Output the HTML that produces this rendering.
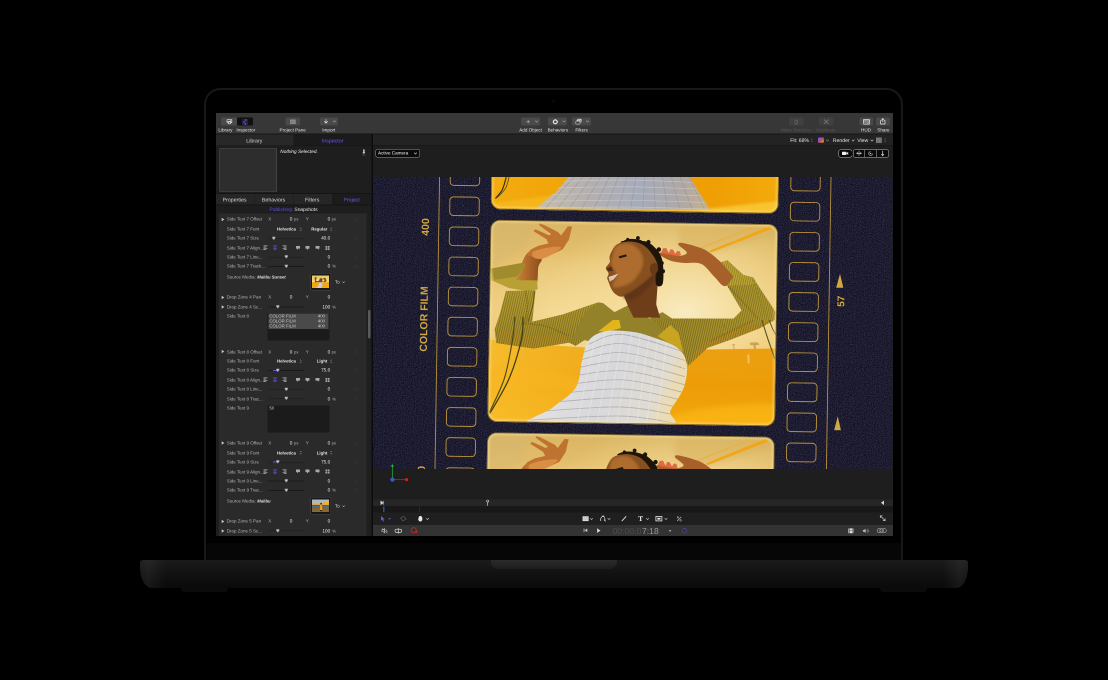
<!DOCTYPE html><html><head><meta charset="utf-8"><title>Motion</title><style>
html,body{margin:0;padding:0;background:#000;}
body{width:1108px;height:680px;position:relative;overflow:hidden;font-family:"Liberation Sans",sans-serif;}
.a{position:absolute;}
#lid{left:204.4px;top:87.5px;width:695px;height:472px;border:2px solid #181818;border-bottom:none;border-radius:16.5px 16.5px 3px 3px;background:#000;box-sizing:content-box;}
#chin{left:206.4px;top:543px;width:695px;height:17px;background:#060606;}
#screen{left:216px;top:113px;width:677px;height:423px;background:#1e1e1e;overflow:hidden;}
#base{left:140px;top:560px;width:828px;height:28px;border-radius:3px 3px 12px 12px / 3px 3px 20px 20px;background:linear-gradient(90deg,rgba(255,255,255,0.03) 0,rgba(255,255,255,0.055) 8px,rgba(255,255,255,0) 26px,rgba(255,255,255,0) 802px,rgba(255,255,255,0.055) 820px,rgba(255,255,255,0.03) 828px),linear-gradient(#1b1b1b 0,#151515 30%,#0e0e0e 70%,#0a0a0a 100%);}
#notch{left:491px;top:560px;width:126px;height:9px;border-radius:0 0 7px 7px;background:linear-gradient(#2b2b2b,#1d1d1d);}
.foot{top:588px;height:4px;background:#0b0b0b;border-radius:0 0 6px 6px;}
.t{position:absolute;text-rendering:geometricPrecision;white-space:nowrap;line-height:12px;height:12px;font-size:9.6px;color:#d6d6d6;}
#s2{position:absolute;left:0;top:0;width:1354px;height:846px;transform-origin:0 0;transform:scale(.5);will-change:transform;overflow:hidden;}
.g{color:#9a9a9a;}
.c{transform:translateX(-50%);}
.r{transform:translateX(-100%);}
.btn{position:absolute;background:#454545;border-radius:3px;}
</style></head><body>
<div id="lid" class="a"></div><div id="chin" class="a"></div><div class="a" style="left:552.4px;top:99.6px;width:2.2px;height:2.2px;border-radius:50%;background:#0b0b0d"></div>
<div id="base" class="a"></div><div id="notch" class="a"></div>
<div class="a foot" style="left:181px;width:47px"></div><div class="a foot" style="left:880px;width:47px"></div>
<div id="screen" class="a"><div id="s2">
<div class="a" style="left:0.00px;top:0.00px;width:1354.00px;height:42.00px;background:#373737;"></div>
<div class="a" style="left:0.00px;top:41.20px;width:1354.00px;height:1.60px;background:#161616;"></div>
<div class="a" style="left:9.60px;top:9.00px;width:32.00px;height:16.40px;background:#4a4a4a;border-radius:3px;"></div>
<div class="t c" style="left:18.80px;top:28px;color:#e2e2e2;font-size:9.20px;">Library</div>
<div class="a" style="left:41.80px;top:9.00px;width:32.60px;height:16.40px;background:#101010;border-radius:3px;"></div>
<div class="t c" style="left:59.60px;top:28px;color:#e2e2e2;font-size:9.20px;">Inspector</div>
<svg class="a" style="left:20.00px;top:11.20px;" width="13.2" height="12.8" viewBox="0 0 6.6 6.4"><path d="M1 1.2h3.2v1.2M1 1.2v2.6h0.8M4.2 1.2h1.6v3h-0.9" fill="none" stroke="#e8e8e8" stroke-width="0.7"/><path d="M1.8 2.6h3.2v2.2c0 1.2-3.2 1.2-3.2 0z" fill="#e8e8e8"/><circle cx="3.4" cy="4.3" r="0.8" fill="#464646"/></svg>
<svg class="a" style="left:51.20px;top:11.60px;" width="14" height="12" viewBox="0 0 7 6"><g stroke="#6a5cf0" stroke-width="0.55" fill="#6a5cf0"><path d="M0.6 1H6.4M0.6 3H6.4M0.6 5H6.4"/><circle cx="4.4" cy="1" r="0.55"/><circle cx="2.6" cy="3" r="0.55"/><circle cx="3.8" cy="5" r="0.6"/></g></svg>
<div class="a" style="left:138.80px;top:9.00px;width:29.20px;height:16.40px;background:#4a4a4a;border-radius:3px;"></div>
<div class="t c" style="left:153.40px;top:28px;color:#e2e2e2;font-size:9.20px;">Project Pane</div>
<svg class="a" style="left:148.00px;top:12.80px;" width="11.6" height="9.6" viewBox="0 0 5.8 4.8"><rect x="0" y="0" width="5.8" height="4.8" fill="#8c8c8c"/><path d="M0 1.6H5.8M0 3.2H5.8M2 1.6V4.8" stroke="#6e6e6e" stroke-width="0.35"/></svg>
<div class="a" style="left:207.80px;top:9.00px;width:36.60px;height:16.40px;background:#4a4a4a;border-radius:3px;"></div>
<div class="t c" style="left:225.60px;top:28px;color:#e2e2e2;font-size:9.20px;">Import</div>
<svg class="a" style="left:215.20px;top:12.40px;" width="10" height="10" viewBox="0 0 5 5"><path d="M2.5 0.4V4 M0.9 2.5L2.5 4.2L4.1 2.5" fill="none" stroke="#f0f0f0" stroke-width="0.65" stroke-linecap="round" stroke-linejoin="round"/></svg>
<svg class="a" style="left:234.20px;top:15.40px;" width="6" height="4" viewBox="0 0 3 2"><path d="M0.3 0.3 L1.5 1.6 L2.7 0.3" fill="none" stroke="#a8a8a8" stroke-width="0.6" stroke-linecap="round"/></svg>
<div class="a" style="left:610.20px;top:9.00px;width:37.60px;height:16.40px;background:#4a4a4a;border-radius:3px;"></div>
<div class="t c" style="left:629.20px;top:28px;color:#e2e2e2;font-size:9.20px;">Add Object</div>
<svg class="a" style="left:619.60px;top:12.60px;" width="8.8" height="8.8" viewBox="0 0 4.4 4.4"><path d="M2.2 0.4V4M0.4 2.2H4" stroke="#9e9e9e" stroke-width="0.8"/></svg>
<svg class="a" style="left:638.40px;top:15.40px;" width="6" height="4" viewBox="0 0 3 2"><path d="M0.3 0.3 L1.5 1.6 L2.7 0.3" fill="none" stroke="#a8a8a8" stroke-width="0.6" stroke-linecap="round"/></svg>
<div class="a" style="left:664.20px;top:9.00px;width:38.00px;height:16.40px;background:#4a4a4a;border-radius:3px;"></div>
<div class="t c" style="left:683.60px;top:28px;color:#e2e2e2;font-size:9.20px;">Behaviors</div>
<svg class="a" style="left:673.20px;top:11.60px;" width="11.2" height="11.2" viewBox="0 0 5.6 5.6"><circle cx="2.8" cy="2.8" r="1.9" fill="none" stroke="#f0f0f0" stroke-width="1.1"/><path d="M2.8 0.2V1M2.8 4.6V5.4M0.2 2.8H1M4.6 2.8H5.4" stroke="#f0f0f0" stroke-width="0.7"/></svg>
<svg class="a" style="left:693.00px;top:15.40px;" width="6" height="4" viewBox="0 0 3 2"><path d="M0.3 0.3 L1.5 1.6 L2.7 0.3" fill="none" stroke="#a8a8a8" stroke-width="0.6" stroke-linecap="round"/></svg>
<div class="a" style="left:712.00px;top:9.00px;width:38.00px;height:16.40px;background:#4a4a4a;border-radius:3px;"></div>
<div class="t c" style="left:731.20px;top:28px;color:#e2e2e2;font-size:9.20px;">Filters</div>
<svg class="a" style="left:719.20px;top:11.20px;" width="12.8" height="12" viewBox="0 0 6.4 6"><rect x="1.6" y="0.4" width="4.4" height="3.4" rx="0.6" fill="#e6e6e6"/><rect x="0.8" y="1.4" width="4.4" height="3.2" rx="0.6" fill="#cfcfcf" stroke="#464646" stroke-width="0.4"/><rect x="0.3" y="2.6" width="4.2" height="3" rx="0.6" fill="#464646" stroke="#e6e6e6" stroke-width="0.5"/></svg>
<svg class="a" style="left:739.80px;top:15.40px;" width="6" height="4" viewBox="0 0 3 2"><path d="M0.3 0.3 L1.5 1.6 L2.7 0.3" fill="none" stroke="#a8a8a8" stroke-width="0.6" stroke-linecap="round"/></svg>
<div class="a" style="left:1146.20px;top:9.00px;width:28.60px;height:16.40px;background:#404040;border-radius:3px;"></div>
<div class="t c" style="left:1159.80px;top:28px;color:#565656;font-size:9.20px;">Make Particles</div>
<svg class="a" style="left:1155.20px;top:11.60px;" width="10.8" height="11.6" viewBox="0 0 5.4 5.8"><circle cx="2.7" cy="2.8" r="1.5" fill="none" stroke="#686868" stroke-width="0.6"/><path d="M1 0.4L1.8 1.6M4.4 0.4L3.6 1.6M1.4 5.4H4M2.7 4.3V5.4" stroke="#686868" stroke-width="0.6" fill="none"/></svg>
<div class="a" style="left:1205.80px;top:9.00px;width:29.20px;height:16.40px;background:#404040;border-radius:3px;"></div>
<div class="t c" style="left:1219.80px;top:28px;color:#565656;font-size:9.20px;">Replicate</div>
<svg class="a" style="left:1214.80px;top:11.80px;" width="11.2" height="10.8" viewBox="0 0 5.6 5.4"><path d="M0.6 0.6L5 4.8M5 0.6L0.6 4.8" stroke="#707070" stroke-width="1" fill="none"/></svg>
<div class="a" style="left:1287.00px;top:9.00px;width:27.00px;height:16.40px;background:#4a4a4a;border-radius:3px;"></div>
<div class="t c" style="left:1300.00px;top:28px;color:#e2e2e2;font-size:9.20px;">HUD</div>
<svg class="a" style="left:1293.60px;top:11.80px;" width="14" height="11.2" viewBox="0 0 7 5.6"><rect x="0.4" y="0.4" width="6.2" height="4.8" rx="0.7" fill="none" stroke="#e4e4e4" stroke-width="0.7"/><path d="M0.4 1.9H6.6" stroke="#e4e4e4" stroke-width="0.7"/><path d="M1.4 3H3M1.4 4.1H3M3.8 3H5.6V4.3H3.8Z" stroke="#e4e4e4" stroke-width="0.45" fill="none"/></svg>
<div class="a" style="left:1319.60px;top:9.00px;width:28.20px;height:16.40px;background:#4a4a4a;border-radius:3px;"></div>
<div class="t c" style="left:1334.80px;top:28px;color:#e2e2e2;font-size:9.20px;">Share</div>
<svg class="a" style="left:1328.00px;top:10.40px;" width="11.2" height="13.2" viewBox="0 0 5.6 6.6"><path d="M1.6 2.6H0.6V6H5V2.6H4" fill="none" stroke="#e8e8e8" stroke-width="0.7"/><path d="M2.8 4V0.6M1.6 1.7L2.8 0.5L4 1.7" fill="none" stroke="#e8e8e8" stroke-width="0.7"/></svg>
<div class="a" style="left:0.00px;top:42.80px;width:311.00px;height:803.20px;background:#1e1e1e;"></div>
<div class="a" style="left:0.00px;top:42.80px;width:155.00px;height:22.00px;background:#282828;"></div>
<div class="a" style="left:155.00px;top:42.80px;width:156.00px;height:22.00px;background:#1b1b1b;"></div>
<div class="t c" style="left:76.60px;top:50px;font-size:10.50px;">Library</div>
<div class="t c" style="left:233.20px;top:50px;color:#6a5cf5;font-size:10.50px;">Inspector</div>
<div class="a" style="left:0.00px;top:64.80px;width:311.00px;height:1.60px;background:#141414;"></div>
<div class="a" style="left:6.60px;top:70.60px;width:115.00px;height:86.00px;background:#2d2d2d;border:1.4px solid #5a5a5a;box-sizing:border-box;"></div>
<div class="t " style="left:128.60px;top:72px;font-style:italic;color:#ececec;font-size:9.50px;">Nothing Selected.</div>
<svg class="a" style="left:292.00px;top:71.60px;" width="7.6" height="14" viewBox="0 0 3.8 7"><path d="M1.2 0.4H2.6V3L3.4 4.2H0.4L1.2 3Z" fill="#d0d0d0"/><path d="M1.9 4.2V5.6" stroke="#d0d0d0" stroke-width="0.5"/><path d="M0.3 6.5H3.5" stroke="#6a6a6a" stroke-width="0.4"/></svg>
<div class="a" style="left:0.00px;top:161.20px;width:311.00px;height:22.00px;background:#262626;"></div>
<div class="a" style="left:0.00px;top:160.40px;width:311.00px;height:1.40px;background:#141414;"></div>
<div class="a" style="left:232.00px;top:161.80px;width:79.00px;height:21.40px;background:#1c1c1c;"></div>
<div class="a" style="left:77.00px;top:161.80px;width:1.40px;height:21.40px;background:#181818;"></div>
<div class="a" style="left:155.00px;top:161.80px;width:1.40px;height:21.40px;background:#181818;"></div>
<div class="a" style="left:232.00px;top:161.80px;width:1.40px;height:21.40px;background:#181818;"></div>
<div class="t c" style="left:37.20px;top:168px;font-size:10.50px;">Properties</div>
<div class="t c" style="left:115.20px;top:168px;font-size:10.50px;">Behaviors</div>
<div class="t c" style="left:192.40px;top:168px;font-size:10.50px;">Filters</div>
<div class="t c" style="left:271.20px;top:168px;color:#6a5cf5;font-size:10.50px;">Project</div>
<div class="a" style="left:0.00px;top:183.20px;width:311.00px;height:1.40px;background:#141414;"></div>
<div class="t c" style="left:129.60px;top:188px;color:#5b50e0;font-size:9.80px;">Publishing</div>
<div class="t c" style="left:180.00px;top:188px;color:#e6e6e6;font-size:9.80px;">Snapshots</div>
<div class="a" style="left:6.40px;top:201.00px;width:294.60px;height:645.00px;background:#2a2a2a;"></div>
<div class="a" style="left:301.00px;top:201.00px;width:10.00px;height:645.00px;background:#1f1f1f;"></div>
<div class="a" style="left:304.40px;top:394.00px;width:4.80px;height:57.00px;background:#5a5a5a;border-radius:2.4px;"></div>
<div class="a" style="left:311.00px;top:42.80px;width:3.00px;height:803.20px;background:#0c0c0c;"></div>
<svg class="a" style="left:10.60px;top:208.80px;" width="6" height="8" viewBox="0 0 3 4"><path d="M0.2 0.3 L2.8 2 L0.2 3.7Z" fill="#c8c8c8"/></svg>
<div class="t " style="left:21.60px;top:206px;color:#b4b4b4;font-size:9.00px;">Side Text 7 Offset</div>
<div class="t " style="left:104.40px;top:206px;color:#b4b4b4;font-size:9.00px;">X</div>
<div class="t r" style="left:152.80px;top:206px;color:#ececec;font-size:9.40px;">0</div>
<div class="t " style="left:156.00px;top:206px;color:#b4b4b4;font-size:8.40px;">px</div>
<div class="t " style="left:179.40px;top:206px;color:#b4b4b4;font-size:9.00px;">Y</div>
<div class="t r" style="left:228.40px;top:206px;color:#ececec;font-size:9.40px;">0</div>
<div class="t " style="left:231.20px;top:206px;color:#b4b4b4;font-size:8.40px;">px</div>
<svg class="a" style="left:276.60px;top:208.40px;" width="8.8" height="8.8" viewBox="0 0 4.4 4.4"><path d="M2.2 0.4 L4 2.2 L2.2 4 L0.4 2.2Z" fill="none" stroke="#3c3c3c" stroke-width="0.5"/></svg>
<div class="t " style="left:21.60px;top:226px;color:#b4b4b4;font-size:9.00px;">Side Text 7 Font</div>
<div class="t " style="left:122.00px;top:226px;color:#e4e4e4;font-weight:bold;font-size:8.60px;">Helvetica</div>
<svg class="a" style="left:167.20px;top:227.60px;" width="4.8" height="8.8" viewBox="0 0 2.4 4.4"><path d="M0.4 1.6 L1.2 0.7 L2 1.6 M0.4 2.8 L1.2 3.7 L2 2.8" fill="none" stroke="#bdbdbd" stroke-width="0.45"/></svg>
<div class="t r" style="left:222.60px;top:226px;color:#e4e4e4;font-weight:bold;font-size:8.60px;">Regular</div>
<svg class="a" style="left:228.00px;top:227.60px;" width="4.8" height="8.8" viewBox="0 0 2.4 4.4"><path d="M0.4 1.6 L1.2 0.7 L2 1.6 M0.4 2.8 L1.2 3.7 L2 2.8" fill="none" stroke="#bdbdbd" stroke-width="0.45"/></svg>
<div class="t " style="left:21.60px;top:244px;color:#b4b4b4;font-size:9.00px;">Side Text 7 Size</div>
<div class="a" style="left:105.40px;top:250.00px;width:72.00px;height:1.40px;background:#1a1a1a;"></div>
<svg class="a" style="left:111.60px;top:246.80px;" width="7.2" height="7.6" viewBox="0 0 3.6 3.8"><path d="M0.3 0.3 H3.3 V1.6 L1.8 3.5 L0.3 1.6Z" fill="#b8b8b8"/></svg>
<div class="t r" style="left:228.40px;top:244px;color:#ececec;font-size:9.40px;">40.0</div>
<svg class="a" style="left:276.60px;top:246.20px;" width="8.8" height="8.8" viewBox="0 0 4.4 4.4"><path d="M2.2 0.4 L4 2.2 L2.2 4 L0.4 2.2Z" fill="none" stroke="#3c3c3c" stroke-width="0.5"/></svg>
<div class="t " style="left:21.60px;top:264px;color:#b4b4b4;font-size:9.00px;">Side Text 7 Align...</div>
<svg class="a" style="left:95.20px;top:265.20px;" width="8" height="8.8" viewBox="0 0 4 4.4"><path d="M0 0.4H4 M0 1.6H2.6 M0 2.8H4 M0 4H2.6" stroke="#b5b5b5" stroke-width="0.7" fill="none"/></svg>
<svg class="a" style="left:114.00px;top:265.20px;" width="8" height="8.8" viewBox="0 0 4 4.4"><path d="M0 0.4H4 M0.7 1.6H3.3 M0 2.8H4 M0.7 4H3.3" stroke="#5b4fe0" stroke-width="0.7" fill="none"/></svg>
<svg class="a" style="left:133.20px;top:265.20px;" width="8" height="8.8" viewBox="0 0 4 4.4"><path d="M0 0.4H4 M1.4 1.6H4 M0 2.8H4 M1.4 4H4" stroke="#b5b5b5" stroke-width="0.7" fill="none"/></svg>
<svg class="a" style="left:160.20px;top:265.60px;" width="8" height="8" viewBox="0 0 4 4"><path d="M0 0H4V2.6H2L1 4V2.6H0Z" fill="#a8a8a8"/></svg>
<svg class="a" style="left:179.40px;top:265.60px;" width="8" height="8" viewBox="0 0 4 4"><path d="M0 0H4V2.6H2.8L2 4L1.2 2.6H0Z" fill="#a8a8a8"/></svg>
<svg class="a" style="left:199.40px;top:265.60px;" width="8" height="8" viewBox="0 0 4 4"><path d="M0 0H4V2.6H3V4L2 2.6H0Z" fill="#a8a8a8"/></svg>
<svg class="a" style="left:219.00px;top:265.60px;" width="8" height="8" viewBox="0 0 4 4"><path d="M0 0H1.7V1.7H0Z M2.3 0H4V1.7H2.3Z M0 2.3H1.7V4H0Z M2.3 2.3H4V4H2.3Z" fill="#a8a8a8"/></svg>
<div class="t " style="left:21.60px;top:282px;color:#b4b4b4;font-size:9.00px;">Side Text 7 Line...</div>
<div class="a" style="left:105.40px;top:287.60px;width:72.00px;height:1.40px;background:#1a1a1a;"></div>
<svg class="a" style="left:137.00px;top:284.40px;" width="7.2" height="7.6" viewBox="0 0 3.6 3.8"><path d="M0.3 0.3 H3.3 V1.6 L1.8 3.5 L0.3 1.6Z" fill="#b8b8b8"/></svg>
<div class="t r" style="left:228.40px;top:282px;color:#ececec;font-size:9.40px;">0</div>
<svg class="a" style="left:276.60px;top:283.80px;" width="8.8" height="8.8" viewBox="0 0 4.4 4.4"><path d="M2.2 0.4 L4 2.2 L2.2 4 L0.4 2.2Z" fill="none" stroke="#3c3c3c" stroke-width="0.5"/></svg>
<div class="t " style="left:21.60px;top:300px;color:#b4b4b4;font-size:9.00px;">Side Text 7 Track...</div>
<div class="a" style="left:105.40px;top:306.40px;width:72.00px;height:1.40px;background:#1a1a1a;"></div>
<svg class="a" style="left:137.00px;top:303.20px;" width="7.2" height="7.6" viewBox="0 0 3.6 3.8"><path d="M0.3 0.3 H3.3 V1.6 L1.8 3.5 L0.3 1.6Z" fill="#b8b8b8"/></svg>
<div class="t r" style="left:228.40px;top:300px;color:#ececec;font-size:9.40px;">0</div>
<svg class="a" style="left:276.60px;top:302.60px;" width="8.8" height="8.8" viewBox="0 0 4.4 4.4"><path d="M2.2 0.4 L4 2.2 L2.2 4 L0.4 2.2Z" fill="none" stroke="#3c3c3c" stroke-width="0.5"/></svg>
<div class="t " style="left:232.60px;top:300px;color:#b4b4b4;font-size:8.40px;">%</div>
<div class="t " style="left:21.60px;top:322px;color:#b4b4b4;font-size:9.00px;">Source Media:</div>
<div class="t " style="left:82.60px;top:322px;color:#e4e4e4;font-style:italic;font-weight:bold;font-size:8.40px;">Malibu Sunset</div>
<div class="t " style="left:238.00px;top:332px;color:#d0d0d0;font-size:9.20px;">To</div>
<svg class="a" style="left:252.40px;top:336.40px;" width="6.4" height="4.8" viewBox="0 0 3.2 2.4"><path d="M0.4 0.5 L1.6 1.8 L2.8 0.5" fill="none" stroke="#bdbdbd" stroke-width="0.55"/></svg>
<div class="a" style="left:188.60px;top:320.00px;width:41.60px;height:34.60px;background:#181818;border:1px solid #484848;border-radius:2px;box-sizing:border-box;"></div>
<svg class="a" style="left:192.00px;top:324.80px;" width="34.4" height="25.4" viewBox="0 0 17.2 12.7"><defs><linearGradient id="t0" x1="0" y1="0" x2="0" y2="1"><stop offset="0" stop-color="#e8c868"/><stop offset="0.5" stop-color="#f2d880"/><stop offset="0.56" stop-color="#f0a414"/><stop offset="1" stop-color="#f4ac10"/></linearGradient></defs><rect width="17.2" height="12.7" fill="url(#t0)"/><path d="M2.6 2.2L4.2 1.2L4.6 3.2L3.6 5.4L7 5.2L7.8 3L9.4 2.4L10.4 3.6L12 2.4L13.6 2.6L14.6 5.6L12.8 6.6L10.2 6L9.8 7.4H7L6.4 6.4L3 7Z" fill="#7a4a1a"/><circle cx="5.4" cy="4.6" r="1" fill="#f8e8a0"/><circle cx="11.4" cy="4.8" r="1.1" fill="#f8e8a0"/><path d="M7 6.8H10.2L10.6 9.4L9 12.7H4.2L6.6 9.6Z" fill="#c8ccd8"/></svg>
<svg class="a" style="left:10.60px;top:364.80px;" width="6" height="8" viewBox="0 0 3 4"><path d="M0.2 0.3 L2.8 2 L0.2 3.7Z" fill="#c8c8c8"/></svg>
<div class="t " style="left:21.60px;top:362px;color:#b4b4b4;font-size:9.00px;">Drop Zone 4 Pan</div>
<div class="t " style="left:104.40px;top:362px;color:#b4b4b4;font-size:9.00px;">X</div>
<div class="t r" style="left:152.80px;top:362px;color:#ececec;font-size:9.40px;">0</div>
<div class="t " style="left:179.40px;top:362px;color:#b4b4b4;font-size:9.00px;">Y</div>
<div class="t r" style="left:228.40px;top:362px;color:#ececec;font-size:9.40px;">0</div>
<svg class="a" style="left:10.60px;top:383.80px;" width="6" height="8" viewBox="0 0 3 4"><path d="M0.2 0.3 L2.8 2 L0.2 3.7Z" fill="#c8c8c8"/></svg>
<div class="t " style="left:21.60px;top:382px;color:#b4b4b4;font-size:9.00px;">Drop Zone 4 Sc...</div>
<div class="a" style="left:105.40px;top:387.20px;width:72.00px;height:1.40px;background:#1a1a1a;"></div>
<svg class="a" style="left:120.40px;top:384.00px;" width="7.2" height="7.6" viewBox="0 0 3.6 3.8"><path d="M0.3 0.3 H3.3 V1.6 L1.8 3.5 L0.3 1.6Z" fill="#b8b8b8"/></svg>
<div class="t r" style="left:228.40px;top:382px;color:#ececec;font-size:9.40px;">100</div>
<div class="t " style="left:232.60px;top:382px;color:#b4b4b4;font-size:8.40px;">%</div>
<div class="t " style="left:21.60px;top:400px;color:#b4b4b4;font-size:9.00px;">Side Text 8</div>
<div class="a" style="left:103.20px;top:400.40px;width:123.60px;height:55.00px;background:#1b1b1b;"></div>
<div class="a" style="left:104.80px;top:401.20px;width:120.00px;height:30.80px;background:#4a4a4a;"></div>
<div class="t " style="left:106.80px;top:400px;color:#c8c8c8;font-size:8.60px;">COLOR FILM</div>
<div class="t r" style="left:218.00px;top:400px;color:#c8c8c8;font-size:8.60px;">400</div>
<div class="t " style="left:106.80px;top:410px;color:#c8c8c8;font-size:8.60px;">COLOR FILM</div>
<div class="t r" style="left:218.00px;top:410px;color:#c8c8c8;font-size:8.60px;">400</div>
<div class="t " style="left:106.80px;top:420px;color:#c8c8c8;font-size:8.60px;">COLOR FILM</div>
<div class="t r" style="left:218.00px;top:420px;color:#c8c8c8;font-size:8.60px;">400</div>
<svg class="a" style="left:10.60px;top:473.00px;" width="6" height="8" viewBox="0 0 3 4"><path d="M0.2 0.3 L2.8 2 L0.2 3.7Z" fill="#c8c8c8"/></svg>
<div class="t " style="left:21.60px;top:472px;color:#b4b4b4;font-size:9.00px;">Side Text 8 Offset</div>
<div class="t " style="left:104.40px;top:472px;color:#b4b4b4;font-size:9.00px;">X</div>
<div class="t r" style="left:152.80px;top:472px;color:#ececec;font-size:9.40px;">0</div>
<div class="t " style="left:156.00px;top:472px;color:#b4b4b4;font-size:8.40px;">px</div>
<div class="t " style="left:179.40px;top:472px;color:#b4b4b4;font-size:9.00px;">Y</div>
<div class="t r" style="left:228.40px;top:472px;color:#ececec;font-size:9.40px;">0</div>
<div class="t " style="left:231.20px;top:472px;color:#b4b4b4;font-size:8.40px;">px</div>
<svg class="a" style="left:276.60px;top:472.60px;" width="8.8" height="8.8" viewBox="0 0 4.4 4.4"><path d="M2.2 0.4 L4 2.2 L2.2 4 L0.4 2.2Z" fill="none" stroke="#3c3c3c" stroke-width="0.5"/></svg>
<div class="t " style="left:21.60px;top:490px;color:#b4b4b4;font-size:9.00px;">Side Text 8 Font</div>
<div class="t " style="left:122.00px;top:490px;color:#e4e4e4;font-weight:bold;font-size:8.60px;">Helvetica</div>
<svg class="a" style="left:167.20px;top:491.60px;" width="4.8" height="8.8" viewBox="0 0 2.4 4.4"><path d="M0.4 1.6 L1.2 0.7 L2 1.6 M0.4 2.8 L1.2 3.7 L2 2.8" fill="none" stroke="#bdbdbd" stroke-width="0.45"/></svg>
<div class="t r" style="left:222.60px;top:490px;color:#e4e4e4;font-weight:bold;font-size:8.60px;">Light</div>
<svg class="a" style="left:228.00px;top:491.60px;" width="4.8" height="8.8" viewBox="0 0 2.4 4.4"><path d="M0.4 1.6 L1.2 0.7 L2 1.6 M0.4 2.8 L1.2 3.7 L2 2.8" fill="none" stroke="#bdbdbd" stroke-width="0.45"/></svg>
<div class="t " style="left:21.60px;top:508px;color:#b4b4b4;font-size:9.00px;">Side Text 8 Size</div>
<div class="a" style="left:105.40px;top:514.20px;width:72.00px;height:1.40px;background:#1a1a1a;"></div>
<div class="a" style="left:114.00px;top:513.90px;width:10.00px;height:1.80px;background:#5b4fe0;"></div>
<svg class="a" style="left:120.40px;top:511.00px;" width="7.2" height="7.6" viewBox="0 0 3.6 3.8"><path d="M0.3 0.3 H3.3 V1.6 L1.8 3.5 L0.3 1.6Z" fill="#b8b8b8"/></svg>
<div class="t r" style="left:228.40px;top:508px;color:#ececec;font-size:9.40px;">75.0</div>
<svg class="a" style="left:276.60px;top:510.40px;" width="8.8" height="8.8" viewBox="0 0 4.4 4.4"><path d="M2.2 0.4 L4 2.2 L2.2 4 L0.4 2.2Z" fill="none" stroke="#3c3c3c" stroke-width="0.5"/></svg>
<div class="t " style="left:21.60px;top:528px;color:#b4b4b4;font-size:9.00px;">Side Text 8 Align...</div>
<svg class="a" style="left:95.20px;top:529.40px;" width="8" height="8.8" viewBox="0 0 4 4.4"><path d="M0 0.4H4 M0 1.6H2.6 M0 2.8H4 M0 4H2.6" stroke="#b5b5b5" stroke-width="0.7" fill="none"/></svg>
<svg class="a" style="left:114.00px;top:529.40px;" width="8" height="8.8" viewBox="0 0 4 4.4"><path d="M0 0.4H4 M0.7 1.6H3.3 M0 2.8H4 M0.7 4H3.3" stroke="#5b4fe0" stroke-width="0.7" fill="none"/></svg>
<svg class="a" style="left:133.20px;top:529.40px;" width="8" height="8.8" viewBox="0 0 4 4.4"><path d="M0 0.4H4 M1.4 1.6H4 M0 2.8H4 M1.4 4H4" stroke="#b5b5b5" stroke-width="0.7" fill="none"/></svg>
<svg class="a" style="left:160.20px;top:529.80px;" width="8" height="8" viewBox="0 0 4 4"><path d="M0 0H4V2.6H2L1 4V2.6H0Z" fill="#a8a8a8"/></svg>
<svg class="a" style="left:179.40px;top:529.80px;" width="8" height="8" viewBox="0 0 4 4"><path d="M0 0H4V2.6H2.8L2 4L1.2 2.6H0Z" fill="#a8a8a8"/></svg>
<svg class="a" style="left:199.40px;top:529.80px;" width="8" height="8" viewBox="0 0 4 4"><path d="M0 0H4V2.6H3V4L2 2.6H0Z" fill="#a8a8a8"/></svg>
<svg class="a" style="left:219.00px;top:529.80px;" width="8" height="8" viewBox="0 0 4 4"><path d="M0 0H1.7V1.7H0Z M2.3 0H4V1.7H2.3Z M0 2.3H1.7V4H0Z M2.3 2.3H4V4H2.3Z" fill="#a8a8a8"/></svg>
<div class="t " style="left:21.60px;top:546px;color:#b4b4b4;font-size:9.00px;">Side Text 8 Line...</div>
<div class="a" style="left:105.40px;top:551.80px;width:72.00px;height:1.40px;background:#1a1a1a;"></div>
<svg class="a" style="left:137.00px;top:548.60px;" width="7.2" height="7.6" viewBox="0 0 3.6 3.8"><path d="M0.3 0.3 H3.3 V1.6 L1.8 3.5 L0.3 1.6Z" fill="#b8b8b8"/></svg>
<div class="t r" style="left:228.40px;top:546px;color:#ececec;font-size:9.40px;">0</div>
<svg class="a" style="left:276.60px;top:548.00px;" width="8.8" height="8.8" viewBox="0 0 4.4 4.4"><path d="M2.2 0.4 L4 2.2 L2.2 4 L0.4 2.2Z" fill="none" stroke="#3c3c3c" stroke-width="0.5"/></svg>
<div class="t " style="left:21.60px;top:566px;color:#b4b4b4;font-size:9.00px;">Side Text 8 Trac...</div>
<div class="a" style="left:105.40px;top:570.60px;width:72.00px;height:1.40px;background:#1a1a1a;"></div>
<svg class="a" style="left:137.00px;top:567.40px;" width="7.2" height="7.6" viewBox="0 0 3.6 3.8"><path d="M0.3 0.3 H3.3 V1.6 L1.8 3.5 L0.3 1.6Z" fill="#b8b8b8"/></svg>
<div class="t r" style="left:228.40px;top:566px;color:#ececec;font-size:9.40px;">0</div>
<svg class="a" style="left:276.60px;top:566.80px;" width="8.8" height="8.8" viewBox="0 0 4.4 4.4"><path d="M2.2 0.4 L4 2.2 L2.2 4 L0.4 2.2Z" fill="none" stroke="#3c3c3c" stroke-width="0.5"/></svg>
<div class="t " style="left:232.60px;top:566px;color:#b4b4b4;font-size:8.40px;">%</div>
<div class="t " style="left:21.60px;top:584px;color:#b4b4b4;font-size:9.00px;">Side Text 9</div>
<div class="a" style="left:103.20px;top:584.60px;width:123.60px;height:54.60px;background:#1b1b1b;"></div>
<div class="t " style="left:106.80px;top:584px;color:#d0d0d0;font-size:8.60px;">50</div>
<svg class="a" style="left:10.60px;top:656.40px;" width="6" height="8" viewBox="0 0 3 4"><path d="M0.2 0.3 L2.8 2 L0.2 3.7Z" fill="#c8c8c8"/></svg>
<div class="t " style="left:21.60px;top:654px;color:#b4b4b4;font-size:9.00px;">Side Text 9 Offset</div>
<div class="t " style="left:104.40px;top:654px;color:#b4b4b4;font-size:9.00px;">X</div>
<div class="t r" style="left:152.80px;top:654px;color:#ececec;font-size:9.40px;">0</div>
<div class="t " style="left:156.00px;top:654px;color:#b4b4b4;font-size:8.40px;">px</div>
<div class="t " style="left:179.40px;top:654px;color:#b4b4b4;font-size:9.00px;">Y</div>
<div class="t r" style="left:228.40px;top:654px;color:#ececec;font-size:9.40px;">0</div>
<div class="t " style="left:231.20px;top:654px;color:#b4b4b4;font-size:8.40px;">px</div>
<svg class="a" style="left:276.60px;top:656.00px;" width="8.8" height="8.8" viewBox="0 0 4.4 4.4"><path d="M2.2 0.4 L4 2.2 L2.2 4 L0.4 2.2Z" fill="none" stroke="#3c3c3c" stroke-width="0.5"/></svg>
<div class="t " style="left:21.60px;top:674px;color:#b4b4b4;font-size:9.00px;">Side Text 9 Font</div>
<div class="t " style="left:122.00px;top:674px;color:#e4e4e4;font-weight:bold;font-size:8.60px;">Helvetica</div>
<svg class="a" style="left:167.20px;top:675.20px;" width="4.8" height="8.8" viewBox="0 0 2.4 4.4"><path d="M0.4 1.6 L1.2 0.7 L2 1.6 M0.4 2.8 L1.2 3.7 L2 2.8" fill="none" stroke="#bdbdbd" stroke-width="0.45"/></svg>
<div class="t r" style="left:222.60px;top:674px;color:#e4e4e4;font-weight:bold;font-size:8.60px;">Light</div>
<svg class="a" style="left:228.00px;top:675.20px;" width="4.8" height="8.8" viewBox="0 0 2.4 4.4"><path d="M0.4 1.6 L1.2 0.7 L2 1.6 M0.4 2.8 L1.2 3.7 L2 2.8" fill="none" stroke="#bdbdbd" stroke-width="0.45"/></svg>
<div class="t " style="left:21.60px;top:692px;color:#b4b4b4;font-size:9.00px;">Side Text 9 Size</div>
<div class="a" style="left:105.40px;top:697.60px;width:72.00px;height:1.40px;background:#1a1a1a;"></div>
<div class="a" style="left:114.00px;top:697.30px;width:10.00px;height:1.80px;background:#5b4fe0;"></div>
<svg class="a" style="left:120.40px;top:694.40px;" width="7.2" height="7.6" viewBox="0 0 3.6 3.8"><path d="M0.3 0.3 H3.3 V1.6 L1.8 3.5 L0.3 1.6Z" fill="#b8b8b8"/></svg>
<div class="t r" style="left:228.40px;top:692px;color:#ececec;font-size:9.40px;">75.0</div>
<svg class="a" style="left:276.60px;top:693.80px;" width="8.8" height="8.8" viewBox="0 0 4.4 4.4"><path d="M2.2 0.4 L4 2.2 L2.2 4 L0.4 2.2Z" fill="none" stroke="#3c3c3c" stroke-width="0.5"/></svg>
<div class="t " style="left:21.60px;top:712px;color:#b4b4b4;font-size:9.00px;">Side Text 9 Align...</div>
<svg class="a" style="left:95.20px;top:713.00px;" width="8" height="8.8" viewBox="0 0 4 4.4"><path d="M0 0.4H4 M0 1.6H2.6 M0 2.8H4 M0 4H2.6" stroke="#b5b5b5" stroke-width="0.7" fill="none"/></svg>
<svg class="a" style="left:114.00px;top:713.00px;" width="8" height="8.8" viewBox="0 0 4 4.4"><path d="M0 0.4H4 M0.7 1.6H3.3 M0 2.8H4 M0.7 4H3.3" stroke="#5b4fe0" stroke-width="0.7" fill="none"/></svg>
<svg class="a" style="left:133.20px;top:713.00px;" width="8" height="8.8" viewBox="0 0 4 4.4"><path d="M0 0.4H4 M1.4 1.6H4 M0 2.8H4 M1.4 4H4" stroke="#b5b5b5" stroke-width="0.7" fill="none"/></svg>
<svg class="a" style="left:160.20px;top:713.40px;" width="8" height="8" viewBox="0 0 4 4"><path d="M0 0H4V2.6H2L1 4V2.6H0Z" fill="#a8a8a8"/></svg>
<svg class="a" style="left:179.40px;top:713.40px;" width="8" height="8" viewBox="0 0 4 4"><path d="M0 0H4V2.6H2.8L2 4L1.2 2.6H0Z" fill="#a8a8a8"/></svg>
<svg class="a" style="left:199.40px;top:713.40px;" width="8" height="8" viewBox="0 0 4 4"><path d="M0 0H4V2.6H3V4L2 2.6H0Z" fill="#a8a8a8"/></svg>
<svg class="a" style="left:219.00px;top:713.40px;" width="8" height="8" viewBox="0 0 4 4"><path d="M0 0H1.7V1.7H0Z M2.3 0H4V1.7H2.3Z M0 2.3H1.7V4H0Z M2.3 2.3H4V4H2.3Z" fill="#a8a8a8"/></svg>
<div class="t " style="left:21.60px;top:730px;color:#b4b4b4;font-size:9.00px;">Side Text 9 Line...</div>
<div class="a" style="left:105.40px;top:735.40px;width:72.00px;height:1.40px;background:#1a1a1a;"></div>
<svg class="a" style="left:137.00px;top:732.20px;" width="7.2" height="7.6" viewBox="0 0 3.6 3.8"><path d="M0.3 0.3 H3.3 V1.6 L1.8 3.5 L0.3 1.6Z" fill="#b8b8b8"/></svg>
<div class="t r" style="left:228.40px;top:730px;color:#ececec;font-size:9.40px;">0</div>
<svg class="a" style="left:276.60px;top:731.60px;" width="8.8" height="8.8" viewBox="0 0 4.4 4.4"><path d="M2.2 0.4 L4 2.2 L2.2 4 L0.4 2.2Z" fill="none" stroke="#3c3c3c" stroke-width="0.5"/></svg>
<div class="t " style="left:21.60px;top:748px;color:#b4b4b4;font-size:9.00px;">Side Text 9 Trac...</div>
<div class="a" style="left:105.40px;top:754.20px;width:72.00px;height:1.40px;background:#1a1a1a;"></div>
<svg class="a" style="left:137.00px;top:751.00px;" width="7.2" height="7.6" viewBox="0 0 3.6 3.8"><path d="M0.3 0.3 H3.3 V1.6 L1.8 3.5 L0.3 1.6Z" fill="#b8b8b8"/></svg>
<div class="t r" style="left:228.40px;top:748px;color:#ececec;font-size:9.40px;">0</div>
<svg class="a" style="left:276.60px;top:750.40px;" width="8.8" height="8.8" viewBox="0 0 4.4 4.4"><path d="M2.2 0.4 L4 2.2 L2.2 4 L0.4 2.2Z" fill="none" stroke="#3c3c3c" stroke-width="0.5"/></svg>
<div class="t " style="left:232.60px;top:748px;color:#b4b4b4;font-size:8.40px;">%</div>
<div class="t " style="left:21.60px;top:770px;color:#b4b4b4;font-size:9.00px;">Source Media:</div>
<div class="t " style="left:82.60px;top:770px;color:#e4e4e4;font-style:italic;font-weight:bold;font-size:8.40px;">Malibu</div>
<div class="t " style="left:238.00px;top:780px;color:#d0d0d0;font-size:9.20px;">To</div>
<svg class="a" style="left:252.40px;top:784.40px;" width="6.4" height="4.8" viewBox="0 0 3.2 2.4"><path d="M0.4 0.5 L1.6 1.8 L2.8 0.5" fill="none" stroke="#bdbdbd" stroke-width="0.55"/></svg>
<div class="a" style="left:188.60px;top:768.00px;width:41.60px;height:34.60px;background:#181818;border:1px solid #484848;border-radius:2px;box-sizing:border-box;"></div>
<svg class="a" style="left:192.00px;top:772.80px;" width="34.4" height="25.4" viewBox="0 0 17.2 12.7"><defs><linearGradient id="t1" x1="0" y1="0" x2="0" y2="1"><stop offset="0" stop-color="#a8bccc"/><stop offset="0.3" stop-color="#b8b8a8"/><stop offset="0.42" stop-color="#d8a050"/><stop offset="0.46" stop-color="#35506a"/><stop offset="0.56" stop-color="#5a7488"/><stop offset="0.62" stop-color="#7a6238"/><stop offset="1" stop-color="#8a6c34"/></linearGradient><linearGradient id="t1b" x1="0" y1="0" x2="1" y2="0"><stop offset="0.45" stop-color="#f0a820" stop-opacity="0"/><stop offset="0.9" stop-color="#f4b020" stop-opacity="0.95"/></linearGradient></defs><rect width="17.2" height="12.7" fill="url(#t1)"/><rect y="2.4" width="17.2" height="3.2" fill="url(#t1b)"/><path d="M8.2 5.4H10L10.4 10.6H7.8Z" fill="#f0a010"/><circle cx="9.1" cy="4.2" r="0.9" fill="#3a2410"/><path d="M8 10.6H10.2V11.6H8Z" fill="#2a1c10"/></svg>
<svg class="a" style="left:10.60px;top:812.80px;" width="6" height="8" viewBox="0 0 3 4"><path d="M0.2 0.3 L2.8 2 L0.2 3.7Z" fill="#c8c8c8"/></svg>
<div class="t " style="left:21.60px;top:810px;color:#b4b4b4;font-size:9.00px;">Drop Zone 5 Pan</div>
<div class="t " style="left:104.40px;top:810px;color:#b4b4b4;font-size:9.00px;">X</div>
<div class="t r" style="left:152.80px;top:810px;color:#ececec;font-size:9.40px;">0</div>
<div class="t " style="left:179.40px;top:810px;color:#b4b4b4;font-size:9.00px;">Y</div>
<div class="t r" style="left:228.40px;top:810px;color:#ececec;font-size:9.40px;">0</div>
<svg class="a" style="left:10.60px;top:831.60px;" width="6" height="8" viewBox="0 0 3 4"><path d="M0.2 0.3 L2.8 2 L0.2 3.7Z" fill="#c8c8c8"/></svg>
<div class="t " style="left:21.60px;top:830px;color:#b4b4b4;font-size:9.00px;">Drop Zone 5 Sc...</div>
<div class="a" style="left:105.40px;top:835.00px;width:72.00px;height:1.40px;background:#1a1a1a;"></div>
<svg class="a" style="left:120.40px;top:831.80px;" width="7.2" height="7.6" viewBox="0 0 3.6 3.8"><path d="M0.3 0.3 H3.3 V1.6 L1.8 3.5 L0.3 1.6Z" fill="#b8b8b8"/></svg>
<div class="t r" style="left:228.40px;top:830px;color:#ececec;font-size:9.40px;">100</div>
<div class="t " style="left:232.60px;top:830px;color:#b4b4b4;font-size:8.40px;">%</div>
<div class="a" style="left:314.00px;top:42.80px;width:1040.00px;height:804.00px;background:#1e1e1e;"></div>
<div class="a" style="left:314.00px;top:42.80px;width:1040.00px;height:21.60px;background:#232323;"></div>
<div class="a" style="left:314.00px;top:64.40px;width:1040.00px;height:1.20px;background:#181818;"></div>
<svg class="a" style="left:314px;top:128px" width="1039.0" height="584" viewBox="373 177 519.5 292">
<defs><linearGradient id="sky" x1="0" y1="0" x2="0" y2="1"><stop offset="0" stop-color="#dab664"/><stop offset="0.2" stop-color="#e6c270"/><stop offset="0.45" stop-color="#efca78"/><stop offset="0.62" stop-color="#f0c468"/><stop offset="1" stop-color="#eab040"/></linearGradient>
<linearGradient id="sand" x1="0" y1="0" x2="0" y2="1"><stop offset="0" stop-color="#eaa51a"/><stop offset="0.45" stop-color="#ee9e08"/><stop offset="0.8" stop-color="#f5ac0e"/><stop offset="1" stop-color="#fbbd1c"/></linearGradient>
<linearGradient id="sandl" x1="0" y1="0" x2="1" y2="0"><stop offset="0" stop-color="#f8c030" stop-opacity="0.85"/><stop offset="0.35" stop-color="#f6b828" stop-opacity="0.5"/><stop offset="0.6" stop-color="#ec9a08" stop-opacity="0.3"/><stop offset="1" stop-color="#ec9a08" stop-opacity="0.45"/></linearGradient>
<linearGradient id="topbg" x1="0" y1="0" x2="1" y2="0"><stop offset="0" stop-color="#f4ac10"/><stop offset="0.3" stop-color="#f0a408"/><stop offset="0.75" stop-color="#ef9e04"/><stop offset="1" stop-color="#f4aa0c"/></linearGradient>
<linearGradient id="topdress" x1="0" y1="0" x2="1" y2="0"><stop offset="0" stop-color="#c8beb0"/><stop offset="0.3" stop-color="#b4b0b0"/><stop offset="0.6" stop-color="#a6acbc"/><stop offset="0.85" stop-color="#b0a8a4"/><stop offset="1" stop-color="#c8b48c"/></linearGradient>
<pattern id="ribs" width="2.2" height="2.2" patternUnits="userSpaceOnUse" patternTransform="rotate(12)"><rect width="1" height="2.2" fill="#6a601c"/><rect x="1" width="1.2" height="2.2" fill="#c0a430"/></pattern>
<radialGradient id="glow" cx="0.68" cy="0.44" r="0.5"><stop offset="0" stop-color="#f9ecc2" stop-opacity="1"/><stop offset="0.45" stop-color="#f7e2a6" stop-opacity="0.7"/><stop offset="1" stop-color="#f6dc96" stop-opacity="0"/></radialGradient>
<radialGradient id="glow2" cx="0.27" cy="0.5" r="0.36"><stop offset="0" stop-color="#f6de9a" stop-opacity="0.9"/><stop offset="1" stop-color="#f4e0a4" stop-opacity="0"/></radialGradient>
<linearGradient id="dress" x1="0" y1="0" x2="1" y2="0.25"><stop offset="0" stop-color="#ece2cc"/><stop offset="0.25" stop-color="#e4e2e0"/><stop offset="0.6" stop-color="#d8d8dc"/><stop offset="0.9" stop-color="#e0dcd4"/><stop offset="1" stop-color="#ecdcb4"/></linearGradient>
<linearGradient id="olive" x1="0" y1="0" x2="0" y2="1"><stop offset="0" stop-color="#ac9430"/><stop offset="1" stop-color="#8a7822"/></linearGradient>
<linearGradient id="olive2" x1="0" y1="0" x2="1" y2="0"><stop offset="0" stop-color="#857422"/><stop offset="1" stop-color="#a68e2c"/></linearGradient>
<linearGradient id="skin" x1="0" y1="0" x2="1" y2="0"><stop offset="0" stop-color="#cf8438"/><stop offset="1" stop-color="#8a4c1c"/></linearGradient>
<filter id="b1" x="-20%" y="-20%" width="140%" height="140%"><feGaussianBlur stdDeviation="1.2"/></filter>
<filter id="b3" x="-20%" y="-20%" width="140%" height="140%"><feGaussianBlur stdDeviation="3"/></filter>
<clipPath id="fclip"><rect x="0" y="0" width="287.5" height="202.0" rx="9.5"/></clipPath><clipPath id="dclip"><path d="M99.8 119.4C103.5 114.5 108.9 111.4 115.9 109.8C122.8 108.1 134.3 109.0 141.7 109.7C149.2 110.4 152.9 111.4 160.6 113.9C168.4 116.4 182.0 120.3 188.3 124.8C194.6 129.3 197.0 134.1 198.3 140.8C199.5 147.5 198.3 157.3 195.7 165.1C193.2 173.0 185.9 181.5 182.8 188.0C179.7 194.5 200.2 201.2 176.9 204.3C153.6 207.3 61.5 209.3 42.9 206.4C24.3 203.4 57.8 193.2 65.3 186.6C72.7 180.0 82.9 174.7 87.6 166.8C92.4 158.9 91.6 147.1 93.7 139.2C95.7 131.3 96.1 124.3 99.8 119.4Z"/></clipPath><g id="photo"><g clip-path="url(#fclip)">
<rect width="287.5" height="202.0" fill="url(#sky)"/>
<rect width="287.5" height="202.0" fill="url(#glow)"/>
<rect width="287.5" height="202.0" fill="url(#glow2)"/>
<path d="M188.0 2.0L285.0 -1.1L285.2 10.2L217.6 30.7L188.3 24.6Z" fill="#d9b45e" opacity="0.55" filter="url(#b3)"/>
<path d="M219.1 27.7L278.6 2.2L281.9 4.4L220.8 29.3Z" fill="#f2a616"/>
<path d="M209.4 24.3L262.4 2.4L267.3 2.7L211.0 25.6Z" fill="#e8b048" opacity="0.7"/>
<path d="M0.9 1.7L43.0 1.0L36.9 27.0L1.6 48.6Z" fill="#d6b670" opacity="0.45" filter="url(#b3)"/>
<path d="M-0.5 119.7L44.9 123.8L96.7 126.2L190.0 129.6L219.1 126.3L290.2 124.2L291.6 208.9L-2.3 213.5Z" fill="url(#sand)"/>
<path d="M-0.5 119.7L44.9 123.8L96.7 126.2L190.0 129.6L219.1 126.3L290.2 124.2L291.6 208.9L-2.3 213.5Z" fill="url(#sandl)"/>
<path d="M0.0 153.6C7.5 147.6 30.7 147.5 45.3 148.1C59.8 148.7 80.4 153.5 87.5 157.1C94.5 160.8 94.7 168.3 87.7 170.1C80.7 171.8 60.1 165.1 45.6 167.5C31.0 169.9 8.1 186.7 0.5 184.4C-7.1 182.1 -7.4 159.7 0.0 153.6Z" fill="#f8b624" opacity="0.6" filter="url(#b3)"/>
<path d="M203.8 187.7C221.8 183.6 273.8 177.4 287.9 179.9C301.9 182.3 306.2 198.5 288.2 202.5C270.2 206.6 193.9 206.7 179.8 204.2C165.8 201.7 185.8 191.7 203.8 187.7Z" fill="#fbb818" opacity="0.7" filter="url(#b3)"/>
<path d="M243.2 120.7L246.5 120.7L245.5 122.6L245.9 125.5L244.6 125.5L244.9 122.6Z" fill="#8a6a20" opacity="0.45"/>
<path d="M261.0 118.8L269.1 118.4L270.7 120.6L266.9 121.3L267.3 124.9L265.3 124.9L264.9 121.3L261.7 121.1Z" fill="#8a6a20" opacity="0.45"/>
<path d="M258.6 130.8L260.9 130.8L261.3 139.5L259.4 139.5Z" fill="#f4d890" opacity="0.6"/>
<path d="M36.2 34.0C38.4 31.1 40.8 30.2 43.4 31.0C46.0 31.7 50.8 35.9 51.6 38.4C52.5 41.0 49.5 41.7 48.5 46.3C47.5 50.8 49.3 63.2 45.6 65.7C41.8 68.2 28.7 64.1 26.1 61.2C23.5 58.2 28.3 52.7 29.9 48.2C31.6 43.6 33.9 36.9 36.2 34.0Z" fill="url(#skin)"/>
<path d="M48.6 2.9L53.0 4.1L67.7 11.3L70.7 14.5L77.3 5.4L81.5 5.6L78.8 18.3L72.5 28.4L62.9 33.1L51.6 38.4L43.5 36.9L36.7 34.5L40.5 29.2L48.2 25.2L58.2 22.8L56.2 18.6L43.1 10.7L45.0 8.8L58.7 14.7L60.9 13.4L48.8 4.8Z" fill="#bf7330"/>
<path d="M43.4 31.1C46.1 29.4 55.0 27.4 59.5 26.7C64.1 25.9 70.3 25.4 70.9 26.5C71.4 27.6 66.1 31.1 62.9 33.1C59.7 35.1 54.9 37.8 51.6 38.4C48.4 39.1 44.9 38.2 43.5 36.9C42.1 35.7 40.8 32.8 43.4 31.1Z" fill="#e0954a" opacity="0.8"/>
<path d="M188.3 22.1C187.5 20.4 188.6 19.7 191.8 20.1C195.1 20.4 203.4 22.6 207.7 24.0C212.1 25.4 214.0 26.0 217.8 28.4C221.7 30.8 226.3 34.5 230.6 38.5C235.0 42.6 243.1 48.9 243.8 52.9C244.5 56.9 238.3 62.7 235.1 62.7C231.8 62.8 228.4 56.9 224.4 53.2C220.4 49.5 216.4 43.0 211.2 40.8C206.1 38.6 198.6 40.6 193.4 40.1C188.3 39.6 184.4 39.3 180.5 38.0C176.5 36.7 171.2 33.7 169.9 32.4C168.5 31.0 169.1 30.0 172.2 30.1C175.3 30.2 184.4 33.1 188.5 33.1C192.6 33.0 196.9 31.5 196.8 29.7C196.8 27.9 189.1 23.7 188.3 22.1Z" fill="#a8602a"/>
<path d="M170.6 31.1L173.0 25.7L176.2 25.6L178.7 30.5L180.3 26.7L182.9 27.0L185.2 31.2L187.1 28.2L189.4 28.5L191.0 32.0L188.5 33.4Z" fill="#dc6238" opacity="0.9"/>
<path d="M0.8 48.9L33.1 42.5L35.6 45.2L26.4 59.9L47.4 59.9L48.2 68.9L39.2 71.0L19.7 68.1L1.8 60.3Z" fill="#b8a034"/>
<path d="M0.8 48.9L33.1 42.5L35.6 45.2L27.6 56.3L5.0 59.9Z" fill="#a08c2c"/>
<path d="M16.5 71.0L46.0 69.9L43.2 101.3L73.5 93.6L108.9 80.9L118.8 90.5L96.6 118.2L87.0 124.8L80.4 121.6L44.9 128.0L7.7 123.1L5.8 109.9L11.2 92.1Z" fill="url(#olive)"/>
<path d="M7.7 123.1L44.9 128.0L80.4 121.6L77.1 113.6L44.8 115.7L10.7 111.4Z" fill="#a87c1e" opacity="0.75"/>
<path d="M231.0 38.9L237.4 36.8L253.5 51.1L263.5 53.6L266.9 59.0L286.4 87.8L285.7 95.8L270.5 104.4L241.6 116.2L219.0 124.6L200.2 142.7L188.3 124.8L165.4 110.6L163.6 97.7L173.3 96.1L194.3 95.7L244.5 95.0L252.4 86.7L237.5 62.1L243.8 52.9Z" fill="url(#olive2)"/>
<path d="M200.2 142.7L219.0 124.6L241.6 116.2L270.5 104.4L283.3 96.1L254.3 102.7L225.3 112.9L206.2 129.4Z" fill="#b07a1c" opacity="0.8"/>
<path d="M231.0 38.9L237.4 36.8L253.5 51.1L263.5 53.6L266.9 59.0L260.1 61.1L237.5 62.1L243.8 52.9Z" fill="#bca634"/>
<path d="M34.8 103.3C38.6 103.7 50.0 103.8 57.5 105.8C65.1 107.8 76.5 113.6 80.3 115.2" fill="none" stroke="#3a2e10" stroke-width="1.7" stroke-dasharray="0.7 1.3" opacity="0.8"/>
<path d="M36.0 70.7C36.3 73.1 38.0 79.9 38.1 85.2C38.2 90.6 36.7 100.1 36.5 103.1" fill="none" stroke="#3a2e10" stroke-width="1.7" stroke-dasharray="0.7 1.3" opacity="0.8"/>
<path d="M239.1 63.5C241.6 66.0 249.0 73.4 253.9 78.6C258.8 83.8 266.3 91.9 268.7 94.6" fill="none" stroke="#3a2e10" stroke-width="1.7" stroke-dasharray="0.7 1.3" opacity="0.8"/>
<path d="M222.2 117.5C225.4 115.9 234.5 111.2 241.4 107.8C248.4 104.3 260.2 98.6 263.9 96.8" fill="none" stroke="#3a2e10" stroke-width="1.7" stroke-dasharray="0.7 1.3" opacity="0.8"/>
<path d="M16.5 71.0L46.0 69.9L43.2 101.3L73.5 93.6L108.9 80.9L118.8 90.5L96.6 118.2L87.0 124.8L80.4 121.6L44.9 128.0L7.7 123.1L5.8 109.9L11.2 92.1Z" fill="url(#ribs)" opacity="0.5"/>
<path d="M231.0 38.9L237.4 36.8L253.5 51.1L263.5 53.6L266.9 59.0L286.4 87.8L285.7 95.8L270.5 104.4L241.6 116.2L219.0 124.6L200.2 142.7L188.3 124.8L165.4 110.6L163.6 97.7L173.3 96.1L194.3 95.7L244.5 95.0L252.4 86.7L237.5 62.1L243.8 52.9Z" fill="url(#ribs)" opacity="0.5"/>
<path d="M108.9 80.9L113.8 81.6L125.3 90.4L138.1 83.7L155.9 93.1L160.3 96.3L173.2 89.6L183.0 95.9L165.2 97.7L189.9 126.4L156.2 112.4L99.8 119.7L83.6 116.7L96.1 90.8Z" fill="#93822a"/>
<path d="M133.6 72.0L158.5 53.1L166.4 51.6L168.1 60.8L166.9 82.0L171.1 95.2L144.6 95.6L139.1 85.1Z" fill="#6e3e1a"/>
<path d="M130.2 20.4C130.4 19.6 135.6 17.3 139.4 17.0C143.1 16.6 148.7 17.3 152.6 18.5C156.6 19.6 160.1 20.8 163.3 23.9C166.6 26.9 170.5 30.8 172.1 37.0C173.8 43.1 174.1 56.6 173.2 60.8C172.2 65.0 167.9 64.6 166.6 62.2C165.2 59.8 166.4 51.4 165.0 46.3C163.6 41.3 160.6 35.5 158.2 31.9C155.7 28.3 153.4 26.4 150.1 24.7C146.8 23.0 141.5 22.3 138.1 21.6C134.8 20.9 130.0 21.2 130.2 20.4Z" fill="#1e140a"/>
<circle cx="137.4" cy="17.4" r="1.5" fill="#1e140a"/>
<circle cx="147.6" cy="15.9" r="1.9" fill="#1e140a"/>
<circle cx="158.2" cy="19.7" r="2.1" fill="#1e140a"/>
<circle cx="168.7" cy="27.1" r="2.2" fill="#1e140a"/>
<circle cx="171.8" cy="40.7" r="2.0" fill="#1e140a"/>
<circle cx="173.2" cy="48.8" r="2.0" fill="#1e140a"/>
<circle cx="169.7" cy="56.8" r="1.9" fill="#1e140a"/>
<circle cx="169.5" cy="61.1" r="1.7" fill="#1e140a"/>
<path d="M126.2 23.1C129.5 20.7 135.0 19.7 139.4 19.6C143.8 19.5 148.9 20.7 152.7 22.7C156.5 24.7 159.6 28.5 162.1 31.8C164.6 35.1 167.0 39.5 167.6 42.3C168.2 45.2 167.0 46.7 165.7 49.0C164.4 51.2 163.0 52.8 159.8 55.7C156.7 58.6 151.1 63.3 146.8 66.5C142.4 69.6 137.2 73.7 133.7 74.6C130.2 75.6 127.7 73.4 125.7 72.1C123.7 70.8 122.8 68.8 121.6 66.9C120.5 64.9 119.6 62.0 118.9 60.3C118.2 58.5 117.5 57.8 117.5 56.3C117.5 54.9 119.0 53.3 118.8 51.7C118.5 50.0 115.8 48.3 116.0 46.4C116.2 44.6 119.3 42.5 119.9 40.4C120.5 38.3 118.7 36.7 119.8 33.8C120.9 30.9 123.0 25.5 126.2 23.1Z" fill="#87501f"/>
<path d="M126.3 24.4C129.1 22.4 135.5 20.8 139.5 21.6C143.4 22.4 147.9 25.9 150.2 29.4C152.4 32.9 154.1 37.7 153.0 42.5C152.0 47.4 147.9 54.8 144.0 58.6C140.1 62.4 133.1 64.5 129.6 65.4C126.0 66.4 123.4 66.2 122.9 64.2C122.4 62.2 127.0 57.1 126.7 53.6C126.4 50.0 122.0 46.3 121.3 43.0C120.5 39.7 121.6 36.9 122.4 33.8C123.3 30.7 123.4 26.5 126.3 24.4Z" fill="#b87430" opacity="0.8" filter="url(#b1)"/>
<path d="M133.7 74.6C134.1 72.9 142.4 69.6 146.8 66.5C151.1 63.3 156.7 58.6 159.8 55.7C163.0 52.8 165.2 48.1 165.7 49.0C166.2 49.8 166.1 56.2 162.6 60.9C159.0 65.6 149.1 74.8 144.3 77.1C139.5 79.4 133.3 76.4 133.7 74.6Z" fill="#5a3214" opacity="0.7" filter="url(#b1)"/>
<path d="M128.4 34.7L135.7 32.5L137.0 34.3L129.8 36.6Z" fill="#2a180c"/>
<path d="M118.8 55.3L128.7 51.9L124.1 57.6L120.2 60.0Z" fill="#ecdccc" opacity="0.85"/>
<path d="M116.7 47.1L121.3 44.6L123.3 49.0L118.7 49.7Z" fill="#4a2810" opacity="0.8"/>
<path d="M161.0 42.4C161.9 41.1 165.0 40.2 166.2 41.0C167.5 41.9 168.7 45.7 168.3 47.6C167.9 49.5 165.1 52.1 163.8 52.3C162.4 52.5 160.9 50.7 160.4 49.1C159.9 47.4 160.0 43.8 161.0 42.4Z" fill="#6a3a18"/>
<path d="M109.4 109.9L123.8 98.3L130.2 98.2L132.0 106.3L119.1 109.7Z" fill="#e4b41c"/>
<path d="M168.7 113.8L181.5 102.3L189.7 110.2L194.8 129.6L188.3 124.8Z" fill="#c9a420"/>
<path d="M99.8 119.4C103.5 114.5 108.9 111.4 115.9 109.8C122.8 108.1 134.3 109.0 141.7 109.7C149.2 110.4 152.9 111.4 160.6 113.9C168.4 116.4 182.0 120.3 188.3 124.8C194.6 129.3 197.0 134.1 198.3 140.8C199.5 147.5 198.3 157.3 195.7 165.1C193.2 173.0 185.9 181.5 182.8 188.0C179.7 194.5 200.2 201.2 176.9 204.3C153.6 207.3 61.5 209.3 42.9 206.4C24.3 203.4 57.8 193.2 65.3 186.6C72.7 180.0 82.9 174.7 87.6 166.8C92.4 158.9 91.6 147.1 93.7 139.2C95.7 131.3 96.1 124.3 99.8 119.4Z" fill="url(#dress)"/>
<path d="M99.9 123.0C105.5 121.2 117.6 111.6 133.7 112.7C149.8 113.8 186.0 126.7 196.5 129.5" fill="none" stroke="#a6a4a4" stroke-width="0.8" opacity="0.8" clip-path="url(#dclip)"/>
<path d="M93.5 131.5C100.3 129.9 116.7 120.7 133.8 121.8C151.0 122.8 186.1 135.0 196.6 137.6" fill="none" stroke="#a6a4a4" stroke-width="0.8" opacity="0.8" clip-path="url(#dclip)"/>
<path d="M87.2 140.0C95.0 138.5 115.7 129.9 134.0 130.8C152.2 131.8 186.3 143.2 196.7 145.7" fill="none" stroke="#a6a4a4" stroke-width="0.8" opacity="0.8" clip-path="url(#dclip)"/>
<path d="M80.9 148.5C89.7 147.1 114.8 139.0 134.1 139.9C153.5 140.8 186.4 151.5 196.8 153.8" fill="none" stroke="#a6a4a4" stroke-width="0.8" opacity="0.8" clip-path="url(#dclip)"/>
<path d="M74.5 157.0C84.5 155.7 113.9 148.1 134.3 148.9C154.7 149.8 186.5 159.7 197.0 161.9" fill="none" stroke="#a6a4a4" stroke-width="0.8" opacity="0.8" clip-path="url(#dclip)"/>
<path d="M68.2 165.5C79.2 164.3 112.9 157.3 134.4 158.0C155.9 158.7 186.6 168.0 197.1 170.0" fill="none" stroke="#a6a4a4" stroke-width="0.8" opacity="0.8" clip-path="url(#dclip)"/>
<path d="M61.8 174.0C74.0 172.9 112.0 166.4 134.5 167.1C157.1 167.7 186.8 176.2 197.2 178.1" fill="none" stroke="#a6a4a4" stroke-width="0.8" opacity="0.8" clip-path="url(#dclip)"/>
<path d="M55.5 182.5C68.7 181.5 111.1 175.5 134.7 176.1C158.3 176.7 186.9 184.5 197.3 186.1" fill="none" stroke="#a6a4a4" stroke-width="0.8" opacity="0.8" clip-path="url(#dclip)"/>
<path d="M49.2 191.1C63.4 190.1 110.1 184.7 134.8 185.2C159.6 185.7 187.0 192.7 197.5 194.2" fill="none" stroke="#a6a4a4" stroke-width="0.8" opacity="0.8" clip-path="url(#dclip)"/>
<path d="M42.8 199.6C58.2 198.7 109.2 193.8 135.0 194.2C160.8 194.7 187.2 201.0 197.6 202.3" fill="none" stroke="#a6a4a4" stroke-width="0.8" opacity="0.8" clip-path="url(#dclip)"/>
<path d="M36.5 208.1C52.9 207.3 108.2 202.9 135.1 203.3C162.0 203.7 187.3 209.2 197.7 210.4" fill="none" stroke="#a6a4a4" stroke-width="0.8" opacity="0.8" clip-path="url(#dclip)"/>
<path d="M107.7 108.3L88.3 208.9" fill="none" stroke="#eceae6" stroke-width="0.8" opacity="0.6" clip-path="url(#dclip)"/>
<path d="M116.6 108.1L98.3 208.7" fill="none" stroke="#eceae6" stroke-width="0.8" opacity="0.6" clip-path="url(#dclip)"/>
<path d="M125.5 108.0L108.3 208.6" fill="none" stroke="#eceae6" stroke-width="0.8" opacity="0.6" clip-path="url(#dclip)"/>
<path d="M134.4 107.9L118.4 208.4" fill="none" stroke="#eceae6" stroke-width="0.8" opacity="0.6" clip-path="url(#dclip)"/>
<path d="M143.3 107.7L128.4 208.3" fill="none" stroke="#eceae6" stroke-width="0.8" opacity="0.6" clip-path="url(#dclip)"/>
<path d="M152.2 107.6L138.4 208.1" fill="none" stroke="#eceae6" stroke-width="0.8" opacity="0.6" clip-path="url(#dclip)"/>
<path d="M161.1 107.4L148.5 207.9" fill="none" stroke="#eceae6" stroke-width="0.8" opacity="0.6" clip-path="url(#dclip)"/>
<path d="M170.0 107.3L158.5 207.8" fill="none" stroke="#eceae6" stroke-width="0.8" opacity="0.6" clip-path="url(#dclip)"/>
<path d="M178.9 107.2L168.5 207.6" fill="none" stroke="#eceae6" stroke-width="0.8" opacity="0.6" clip-path="url(#dclip)"/>
<path d="M33.9 96.5C33.7 100.3 34.8 108.9 32.7 119.2C30.5 129.4 26.2 145.7 21.1 158.2C16.1 170.6 5.4 187.8 2.3 193.7" fill="none" stroke="#3e3c12" stroke-width="1.25"/>
<path d="M25.8 96.6C25.5 100.4 25.4 109.0 23.8 119.3C22.2 129.6 19.9 146.1 16.3 158.2C12.7 170.4 4.3 186.7 1.9 192.4" fill="none" stroke="#4a4816" stroke-width="1.1"/>
<path d="M44.9 70.6C44.6 73.0 44.5 80.0 43.5 85.2C42.5 90.3 39.6 98.7 38.9 101.4" fill="none" stroke="#5c581c" stroke-width="0.9"/>
<path d="M272.8 96.0C273.8 98.9 276.5 107.2 278.7 113.7C281.0 120.1 285.1 131.1 286.3 134.6" fill="none" stroke="#4e5424" stroke-width="1.1"/>
<path d="M280.1 95.9C280.6 97.2 282.3 101.5 283.4 103.9C284.5 106.3 286.2 109.2 286.8 110.3" fill="none" stroke="#4e5424" stroke-width="0.9"/>
<path d="M263.2 54.2C264.4 57.7 267.5 68.4 270.0 75.1C272.6 81.8 277.0 91.2 278.4 94.4" fill="none" stroke="#8a8a2c" stroke-width="0.9"/>
</g>
<rect x="1" y="1" width="285.5" height="200.0" rx="8.5" fill="none" stroke="#f8e8a8" stroke-width="2.2" opacity="0.65" filter="url(#b1)" clip-path="url(#fclip)"/>
<rect x="0.4" y="0.4" width="286.7" height="201.2" rx="9.2" fill="none" stroke="#6a4c14" stroke-width="0.8" opacity="0.8"/>
</g>
<filter id="grain" x="0" y="0" width="100%" height="100%" color-interpolation-filters="sRGB"><feTurbulence type="fractalNoise" baseFrequency="1.1" numOctaves="2" seed="3"/><feColorMatrix type="matrix" values="0 0 0 0 0.32  0 0 0 0 0.32  0 0 0 0 0.46  0.7 0.7 0.7 0 -0.85"/></filter>
</defs>
<rect x="373" y="177" width="519.5" height="292" fill="#100f20"/>
<rect x="373" y="177" width="519.5" height="292" filter="url(#grain)" opacity="1"/>
<g transform="rotate(0.9 632.5 323.0)">
<line x1="437.3" y1="150" x2="437.3" y2="500" stroke="#b8913c" stroke-width="0.9"/>
<line x1="828.7" y1="150" x2="828.7" y2="500" stroke="#b8913c" stroke-width="0.9"/>
<rect x="448.0" y="139.5" width="29.4" height="18.6" rx="3.6" fill="none" stroke="#b8913c" stroke-width="0.95"/>
<rect x="788.6" y="139.5" width="29.4" height="18.6" rx="3.6" fill="none" stroke="#b8913c" stroke-width="0.95"/>
<rect x="448.0" y="169.6" width="29.4" height="18.6" rx="3.6" fill="none" stroke="#b8913c" stroke-width="0.95"/>
<rect x="788.6" y="169.6" width="29.4" height="18.6" rx="3.6" fill="none" stroke="#b8913c" stroke-width="0.95"/>
<rect x="448.0" y="199.7" width="29.4" height="18.6" rx="3.6" fill="none" stroke="#b8913c" stroke-width="0.95"/>
<rect x="788.6" y="199.7" width="29.4" height="18.6" rx="3.6" fill="none" stroke="#b8913c" stroke-width="0.95"/>
<rect x="448.0" y="229.8" width="29.4" height="18.6" rx="3.6" fill="none" stroke="#b8913c" stroke-width="0.95"/>
<rect x="788.6" y="229.8" width="29.4" height="18.6" rx="3.6" fill="none" stroke="#b8913c" stroke-width="0.95"/>
<rect x="448.0" y="259.9" width="29.4" height="18.6" rx="3.6" fill="none" stroke="#b8913c" stroke-width="0.95"/>
<rect x="788.6" y="259.9" width="29.4" height="18.6" rx="3.6" fill="none" stroke="#b8913c" stroke-width="0.95"/>
<rect x="448.0" y="290.0" width="29.4" height="18.6" rx="3.6" fill="none" stroke="#b8913c" stroke-width="0.95"/>
<rect x="788.6" y="290.0" width="29.4" height="18.6" rx="3.6" fill="none" stroke="#b8913c" stroke-width="0.95"/>
<rect x="448.0" y="320.1" width="29.4" height="18.6" rx="3.6" fill="none" stroke="#b8913c" stroke-width="0.95"/>
<rect x="788.6" y="320.1" width="29.4" height="18.6" rx="3.6" fill="none" stroke="#b8913c" stroke-width="0.95"/>
<rect x="448.0" y="350.2" width="29.4" height="18.6" rx="3.6" fill="none" stroke="#b8913c" stroke-width="0.95"/>
<rect x="788.6" y="350.2" width="29.4" height="18.6" rx="3.6" fill="none" stroke="#b8913c" stroke-width="0.95"/>
<rect x="448.0" y="380.3" width="29.4" height="18.6" rx="3.6" fill="none" stroke="#b8913c" stroke-width="0.95"/>
<rect x="788.6" y="380.3" width="29.4" height="18.6" rx="3.6" fill="none" stroke="#b8913c" stroke-width="0.95"/>
<rect x="448.0" y="410.4" width="29.4" height="18.6" rx="3.6" fill="none" stroke="#b8913c" stroke-width="0.95"/>
<rect x="788.6" y="410.4" width="29.4" height="18.6" rx="3.6" fill="none" stroke="#b8913c" stroke-width="0.95"/>
<rect x="448.0" y="440.5" width="29.4" height="18.6" rx="3.6" fill="none" stroke="#b8913c" stroke-width="0.95"/>
<rect x="788.6" y="440.5" width="29.4" height="18.6" rx="3.6" fill="none" stroke="#b8913c" stroke-width="0.95"/>
<rect x="448.0" y="470.6" width="29.4" height="18.6" rx="3.6" fill="none" stroke="#b8913c" stroke-width="0.95"/>
<rect x="788.6" y="470.6" width="29.4" height="18.6" rx="3.6" fill="none" stroke="#b8913c" stroke-width="0.95"/>
<text transform="translate(423.5 230.3) rotate(-90)" text-anchor="middle" font-family="Liberation Sans, sans-serif" font-weight="bold" font-size="10.5" fill="#d0a741" dominant-baseline="central">400</text>
<text transform="translate(423.4 322.3) rotate(-90)" text-anchor="middle" font-family="Liberation Sans, sans-serif" font-weight="bold" font-size="10.5" fill="#d0a741" dominant-baseline="central">COLOR FILM</text>
<text transform="translate(423.4 478) rotate(-90)" text-anchor="middle" font-family="Liberation Sans, sans-serif" font-weight="bold" font-size="10.5" fill="#d0a741" dominant-baseline="central">400</text>
<text transform="translate(840.5 298) rotate(-90)" text-anchor="middle" font-family="Liberation Sans, sans-serif" font-weight="bold" font-size="10" fill="#d0a741" dominant-baseline="central">57</text>
<path d="M839.2 270.5 l3.6 14 h-7.2z" fill="#d0a741"/>
<path d="M839.2 413 l3.4 14 h-6.8z" fill="#d0a741"/>
<use href="#photo" x="489.0" y="9.400000000000006"/>
<use href="#photo" x="489.0" y="222.0"/>
<use href="#photo" x="489.0" y="434.6"/>
<g transform="translate(489.0 9.400000000000006)"><g clip-path="url(#fclip)">
<rect x="0" y="150" width="287.5" height="52" fill="url(#topbg)"/>
<path d="M185.1 201.9L288.4 189.1L288.6 200.3L201.9 204.4Z" fill="#fbd040" opacity="0.7" filter="url(#b1)"/>
<path d="M0.3 196.4L61.7 187.0L73.2 200.9L0.4 203.4Z" fill="#f8c028" opacity="0.6" filter="url(#b1)"/>
<path d="M81.0 164.4L195.7 162.6L210.0 184.7L219.2 199.1L45.2 200.5L64.5 184.2Z" fill="url(#topdress)"/>
<path d="M86.6 164.3L53.6 201.2" stroke="#8e8a8c" stroke-width="0.7" opacity="0.55" fill="none"/>
<path d="M95.0 164.1L65.9 201.0" stroke="#8e8a8c" stroke-width="0.7" opacity="0.55" fill="none"/>
<path d="M103.4 164.0L78.2 200.8" stroke="#8e8a8c" stroke-width="0.7" opacity="0.55" fill="none"/>
<path d="M111.7 163.9L90.5 200.6" stroke="#8e8a8c" stroke-width="0.7" opacity="0.55" fill="none"/>
<path d="M120.1 163.7L102.8 200.4" stroke="#8e8a8c" stroke-width="0.7" opacity="0.55" fill="none"/>
<path d="M128.5 163.6L115.1 200.2" stroke="#8e8a8c" stroke-width="0.7" opacity="0.55" fill="none"/>
<path d="M136.9 163.5L127.4 200.0" stroke="#8e8a8c" stroke-width="0.7" opacity="0.55" fill="none"/>
<path d="M145.3 163.4L139.7 199.8" stroke="#8e8a8c" stroke-width="0.7" opacity="0.55" fill="none"/>
<path d="M153.7 163.2L152.0 199.6" stroke="#8e8a8c" stroke-width="0.7" opacity="0.55" fill="none"/>
<path d="M162.1 163.1L164.4 199.4" stroke="#8e8a8c" stroke-width="0.7" opacity="0.55" fill="none"/>
<path d="M170.5 163.0L176.7 199.2" stroke="#8e8a8c" stroke-width="0.7" opacity="0.55" fill="none"/>
<path d="M178.9 162.8L189.0 199.0" stroke="#8e8a8c" stroke-width="0.7" opacity="0.55" fill="none"/>
<path d="M187.3 162.7L201.3 198.8" stroke="#8e8a8c" stroke-width="0.7" opacity="0.55" fill="none"/>
<path d="M195.7 162.6L213.6 198.7" stroke="#8e8a8c" stroke-width="0.7" opacity="0.55" fill="none"/>
<path d="M72.7 172.9C83.0 172.5 112.8 171.0 134.2 170.8C155.7 170.6 190.2 171.8 201.4 172.0" stroke="#d8d4d0" stroke-width="0.7" opacity="0.6" fill="none"/>
<path d="M66.7 179.7C77.9 179.3 111.2 177.7 134.3 177.5C157.5 177.3 193.6 178.4 205.4 178.6" stroke="#d8d4d0" stroke-width="0.7" opacity="0.6" fill="none"/>
<path d="M60.6 186.5C72.9 186.1 109.6 184.4 134.5 184.2C159.3 184.0 197.0 185.1 209.5 185.3" stroke="#d8d4d0" stroke-width="0.7" opacity="0.6" fill="none"/>
<path d="M54.6 193.3C67.9 192.9 108.1 191.2 134.6 190.9C161.0 190.7 200.3 191.8 213.5 191.9" stroke="#d8d4d0" stroke-width="0.7" opacity="0.6" fill="none"/>
<path d="M48.5 200.1C62.9 199.7 106.5 197.9 134.7 197.7C162.8 197.4 203.7 198.4 217.5 198.6" stroke="#d8d4d0" stroke-width="0.7" opacity="0.6" fill="none"/>
<path d="M15.3 168.2C14.6 170.5 13.1 178.4 11.3 182.2C9.5 186.1 5.6 189.8 4.5 191.3" stroke="#2e2c10" stroke-width="1.1" fill="none"/>
<path d="M18.1 168.1C17.5 170.2 16.6 176.8 14.6 180.5C12.7 184.2 7.8 188.5 6.4 190.2" stroke="#4a4816" stroke-width="0.8" fill="none"/>
</g>
<rect x="1" y="1" width="285.5" height="200.0" rx="8.5" fill="none" stroke="#fce890" stroke-width="2.2" opacity="0.7" filter="url(#b1)" clip-path="url(#fclip)"/>
<rect x="0.4" y="0.4" width="286.7" height="201.2" rx="9.2" fill="none" stroke="#6a4c14" stroke-width="0.8" opacity="0.8"/>
</g>
</g></svg>
<div class="t " style="left:1148.40px;top:50px;color:#e0e0e0;font-size:10.30px;">Fit: 68%</div>
<svg class="a" style="left:1189.20px;top:50.00px;" width="4.8" height="8.8" viewBox="0 0 2.4 4.4"><path d="M0.4 1.6 L1.2 0.7 L2 1.6 M0.4 2.8 L1.2 3.7 L2 2.8" fill="none" stroke="#9a9a9a" stroke-width="0.45"/></svg>
<svg class="a" style="left:1204.00px;top:49.20px;" width="11.6" height="10.4" viewBox="0 0 5.8 5.2"><defs><linearGradient id="cg" x1="0" y1="0" x2="1" y2="1"><stop offset="0" stop-color="#3a6ad8"/><stop offset="0.35" stop-color="#a050c0"/><stop offset="0.6" stop-color="#d84a4a"/><stop offset="0.8" stop-color="#d8a030"/><stop offset="1" stop-color="#40a050"/></linearGradient></defs><rect width="5.8" height="5.2" fill="url(#cg)"/></svg>
<svg class="a" style="left:1219.80px;top:52.80px;" width="6" height="4" viewBox="0 0 3 2"><path d="M0.3 0.3 L1.5 1.6 L2.7 0.3" fill="none" stroke="#8a8a8a" stroke-width="0.6" stroke-linecap="round"/></svg>
<div class="t " style="left:1233.60px;top:50px;color:#e0e0e0;font-size:10.30px;">Render</div>
<svg class="a" style="left:1271.40px;top:53.20px;" width="6" height="4" viewBox="0 0 3 2"><path d="M0.3 0.3 L1.5 1.6 L2.7 0.3" fill="none" stroke="#cfcfcf" stroke-width="0.6" stroke-linecap="round"/></svg>
<div class="t " style="left:1282.40px;top:50px;color:#e0e0e0;font-size:10.30px;">View</div>
<svg class="a" style="left:1308.60px;top:53.20px;" width="6" height="4" viewBox="0 0 3 2"><path d="M0.3 0.3 L1.5 1.6 L2.7 0.3" fill="none" stroke="#cfcfcf" stroke-width="0.6" stroke-linecap="round"/></svg>
<svg class="a" style="left:1320.40px;top:49.20px;" width="11.6" height="10.8" viewBox="0 0 5.8 5.4"><rect x="0.3" y="0.3" width="5.2" height="4.8" fill="#6a6a6a" stroke="#8c8c8c" stroke-width="0.5"/><path d="M0.3 1.9H5.5M0.3 3.5H5.5M2 0.3V5.1M3.8 0.3V5.1" stroke="#8c8c8c" stroke-width="0.35"/></svg>
<svg class="a" style="left:1335.60px;top:50.20px;" width="4.8" height="8.8" viewBox="0 0 2.4 4.4"><path d="M0.4 1.6 L1.2 0.7 L2 1.6 M0.4 2.8 L1.2 3.7 L2 2.8" fill="none" stroke="#9a9a9a" stroke-width="0.45"/></svg>
<div class="a" style="left:319.20px;top:72.40px;width:88.40px;height:16.40px;background:#0a0a0a;border:1.1px solid #9a9a9a;border-radius:4px;box-sizing:border-box;"></div>
<div class="t " style="left:324.00px;top:74px;color:#f6f6f6;font-size:9.20px;">Active Camera</div>
<svg class="a" style="left:396.20px;top:79.20px;" width="6" height="4" viewBox="0 0 3 2"><path d="M0.3 0.3 L1.5 1.6 L2.7 0.3" fill="none" stroke="#d8d8d8" stroke-width="0.6" stroke-linecap="round"/></svg>
<div class="a" style="left:1244.60px;top:72.60px;width:27.00px;height:16.00px;background:#0a0a0a;border:1.1px solid #b8b8b8;border-radius:4px;box-sizing:border-box;"></div>
<svg class="a" style="left:1252.00px;top:77.00px;" width="12.8" height="7.6" viewBox="0 0 6.4 3.8"><rect x="0" y="0.3" width="4.4" height="3.2" rx="0.6" fill="#f0f0f0"/><path d="M4.6 1.4L6.2 0.5V3.3L4.6 2.4Z" fill="#f0f0f0"/></svg>
<div class="a" style="left:1274.00px;top:72.60px;width:71.60px;height:16.00px;background:#0a0a0a;border:1.1px solid #b8b8b8;border-radius:4px;box-sizing:border-box;"></div>
<div class="a" style="left:1297.20px;top:73.60px;width:1.20px;height:14.00px;background:#b8b8b8;"></div>
<div class="a" style="left:1321.20px;top:73.60px;width:1.20px;height:14.00px;background:#b8b8b8;"></div>
<svg class="a" style="left:1279.60px;top:75.20px;" width="12" height="11.2" viewBox="0 0 6 5.6"><path d="M3 0.3V5.3M0.8 2.8H5.2M1.6 1.9L0.6 2.8L1.6 3.7M4.4 1.9L5.4 2.8L4.4 3.7" fill="none" stroke="#d8d8d8" stroke-width="0.6"/></svg>
<svg class="a" style="left:1304.00px;top:75.60px;" width="10.8" height="10.4" viewBox="0 0 5.4 5.2"><path d="M4.5 2.6A1.9 1.9 0 1 1 2.6 0.7" fill="none" stroke="#c8c8c8" stroke-width="0.6"/><circle cx="2.6" cy="2.6" r="0.7" fill="#c8c8c8"/></svg>
<svg class="a" style="left:1328.80px;top:75.20px;" width="8.8" height="11.6" viewBox="0 0 4.4 5.8"><path d="M2.2 0.3V5M0.9 3.6L2.2 5.2L3.5 3.6" fill="none" stroke="#e0e0e0" stroke-width="0.7"/></svg>
<svg class="a" style="left:344.00px;top:698.00px;" width="44" height="44" viewBox="0 0 22 22"><path d="M4.4 17.2V4.4" stroke="#1f9a35" stroke-width="0.9"/><path d="M4.4 2L5.9 4.8H2.9Z" fill="#1fc040"/><path d="M4.4 17.6H17" stroke="#c01818" stroke-width="0.9"/><circle cx="18.6" cy="17.6" r="1.6" fill="#f01414"/><circle cx="4.4" cy="17.6" r="2" fill="#3a5ad8"/></svg>
<div class="a" style="left:314.00px;top:772.60px;width:1040.00px;height:13.20px;background:#262626;"></div>
<div class="a" style="left:314.00px;top:785.80px;width:1040.00px;height:13.60px;background:#181818;"></div>
<div class="a" style="left:314.00px;top:799.40px;width:1040.00px;height:24.60px;background:#1f1f1f;"></div>
<div class="a" style="left:314.00px;top:824.00px;width:1040.00px;height:22.00px;background:#333;"></div>
<svg class="a" style="left:328.80px;top:774.80px;" width="7.2" height="9.2" viewBox="0 0 3.6 4.6"><path d="M0.3 0.3V4.3M0.6 0.6L2.8 2.3L0.6 4Z" fill="#d8d8d8" stroke="#d8d8d8" stroke-width="0.5"/><path d="M3.2 0.3V4.3" stroke="#d8d8d8" stroke-width="0.5"/></svg>
<svg class="a" style="left:1329.20px;top:774.80px;" width="7.2" height="9.2" viewBox="0 0 3.6 4.6"><path d="M3.3 0.3V4.3M3 0.6L0.8 2.3L3 4Z" fill="#d8d8d8" stroke="#d8d8d8" stroke-width="0.5"/></svg>
<svg class="a" style="left:539.60px;top:773.20px;" width="6.8" height="13.2" viewBox="0 0 3.4 6.6"><circle cx="1.7" cy="1.6" r="1.1" fill="none" stroke="#e0e0e0" stroke-width="0.6"/><path d="M1.7 2.7V6.4" stroke="#e0e0e0" stroke-width="0.6"/></svg>
<div class="a" style="left:334.40px;top:786.80px;width:2.80px;height:10.80px;background:#2f4f8a;"></div>
<div class="a" style="left:407.00px;top:786.80px;width:1.00px;height:10.80px;background:#3a3a3a;"></div>
<svg class="a" style="left:329.20px;top:804.80px;" width="8.8" height="13.6" viewBox="0 0 4.4 6.8"><path d="M0.6 0.5V5.2L1.9 4.1L2.9 6.3L3.6 5.9L2.7 3.8L4.1 3.7Z" fill="#6a5cf0"/></svg>
<svg class="a" style="left:344.40px;top:810.00px;" width="6.4" height="3.6" viewBox="0 0 3.2 1.8"><path d="M0.2 0.3H3L1.6 1.6Z" fill="#6a5cf0"/></svg>
<svg class="a" style="left:367.20px;top:805.20px;" width="14.8" height="12.4" viewBox="0 0 7.4 6.2"><path d="M1 2.6L4.4 0.8L6.6 3.4L3.4 5.4Z" fill="none" stroke="#5c5c5c" stroke-width="0.7"/></svg>
<svg class="a" style="left:403.20px;top:805.20px;" width="11.2" height="12.8" viewBox="0 0 5.6 6.4"><path d="M1 3.2C1 1 2 0.5 2.8 0.5C4 0.5 4.9 1.4 4.9 3.4C4.9 5.2 4 6 2.9 6C1.9 6 1.4 5.4 0.6 4.2Z" fill="#e8e8e8"/></svg>
<svg class="a" style="left:420.20px;top:809.60px;" width="6" height="4" viewBox="0 0 3 2"><path d="M0.3 0.3 L1.5 1.6 L2.7 0.3" fill="none" stroke="#c8c8c8" stroke-width="0.6" stroke-linecap="round"/></svg>
<svg class="a" style="left:330.80px;top:829.60px;" width="13.2" height="11.2" viewBox="0 0 6.6 5.6"><path d="M0.4 1.8H1.6L3.2 0.6V4.8L1.6 3.6H0.4Z" fill="none" stroke="#c8c8c8" stroke-width="0.55"/><path d="M0.6 0.4L6 5.2M4.2 1.6L5.8 3.6" stroke="#c8c8c8" stroke-width="0.55"/></svg>
<svg class="a" style="left:357.20px;top:829.60px;" width="15.2" height="11.2" viewBox="0 0 7.6 5.6"><rect x="0.5" y="1.2" width="6.6" height="3.2" rx="1.4" fill="none" stroke="#e0e0e0" stroke-width="0.7"/><path d="M3.8 0.2V5.4" stroke="#e0e0e0" stroke-width="0.7"/></svg>
<svg class="a" style="left:389.20px;top:828.40px;" width="15.2" height="13.6" viewBox="0 0 7.6 6.8"><circle cx="3.2" cy="3.2" r="2.6" fill="none" stroke="#d82820" stroke-width="0.7"/><circle cx="5.8" cy="4.8" r="1.1" fill="#d82820"/></svg>
<svg class="a" style="left:732.80px;top:805.60px;" width="12.8" height="11.2" viewBox="0 0 6.4 5.6"><rect x="0.4" y="0.6" width="5.4" height="4.2" fill="#c8c8c8" stroke="#f0f0f0" stroke-width="0.6"/></svg>
<svg class="a" style="left:748.20px;top:809.60px;" width="6" height="4" viewBox="0 0 3 2"><path d="M0.3 0.3 L1.5 1.6 L2.7 0.3" fill="none" stroke="#c8c8c8" stroke-width="0.6" stroke-linecap="round"/></svg>
<svg class="a" style="left:766.80px;top:804.40px;" width="13.2" height="14" viewBox="0 0 6.6 7"><path d="M0.8 6C1 3 2.4 1.2 3.6 1.2C4.8 1.2 5.4 3 5.6 5.6" fill="none" stroke="#d8d8d8" stroke-width="0.7"/><circle cx="3.6" cy="1.2" r="0.8" fill="#d8d8d8"/><path d="M4.6 4.6L6 6.4" stroke="#d8d8d8" stroke-width="0.8"/></svg>
<svg class="a" style="left:782.60px;top:809.60px;" width="6" height="4" viewBox="0 0 3 2"><path d="M0.3 0.3 L1.5 1.6 L2.7 0.3" fill="none" stroke="#c8c8c8" stroke-width="0.6" stroke-linecap="round"/></svg>
<svg class="a" style="left:809.60px;top:804.80px;" width="12" height="12.8" viewBox="0 0 6 6.4"><path d="M0.8 5.6L5.2 0.8" stroke="#e0e0e0" stroke-width="0.9"/></svg>
<div class="t " style="left:844.40px;top:806px;color:#f0f0f0;font-weight:bold;font-family:'Liberation Serif',serif;font-size:14.40px;">T</div>
<svg class="a" style="left:859.80px;top:809.60px;" width="6" height="4" viewBox="0 0 3 2"><path d="M0.3 0.3 L1.5 1.6 L2.7 0.3" fill="none" stroke="#c8c8c8" stroke-width="0.6" stroke-linecap="round"/></svg>
<svg class="a" style="left:879.20px;top:805.60px;" width="14" height="11.2" viewBox="0 0 7 5.6"><rect x="0.4" y="0.5" width="6" height="4.4" fill="none" stroke="#e8e8e8" stroke-width="0.8"/><rect x="1.8" y="1.8" width="3.2" height="1.8" fill="#e8e8e8"/></svg>
<svg class="a" style="left:897.00px;top:809.60px;" width="6" height="4" viewBox="0 0 3 2"><path d="M0.3 0.3 L1.5 1.6 L2.7 0.3" fill="none" stroke="#c8c8c8" stroke-width="0.6" stroke-linecap="round"/></svg>
<svg class="a" style="left:921.20px;top:805.60px;" width="11.2" height="11.6" viewBox="0 0 5.6 5.8"><path d="M0.8 5L4.8 0.8" stroke="#d8d8d8" stroke-width="0.6"/><circle cx="1.4" cy="1.4" r="0.8" fill="none" stroke="#d8d8d8" stroke-width="0.5"/><circle cx="4.2" cy="4.4" r="0.8" fill="none" stroke="#d8d8d8" stroke-width="0.5"/></svg>
<svg class="a" style="left:1327.20px;top:804.40px;" width="12.8" height="12.8" viewBox="0 0 6.4 6.4"><path d="M0.8 0.8L5.6 5.6M0.8 3V0.8H3M3.4 5.6H5.6V3.4" fill="none" stroke="#c8c8c8" stroke-width="0.7"/></svg>
<svg class="a" style="left:735.20px;top:830.40px;" width="8.8" height="9.2" viewBox="0 0 4.4 4.6"><path d="M0.5 0.5V4.1" stroke="#c8c8c8" stroke-width="0.7"/><path d="M3.8 0.5V4.1L1 2.3Z" fill="#c8c8c8"/></svg>
<svg class="a" style="left:760.80px;top:829.60px;" width="8.8" height="10.4" viewBox="0 0 4.4 5.2"><path d="M0.6 0.4L4 2.6L0.6 4.8Z" fill="#e0e0e0"/></svg>
<div class="t " style="left:793.20px;top:830px;color:#4e4e4e;font-size:17.20px;">00:00:0</div>
<div class="t " style="left:852.00px;top:830px;color:#9a9a9a;font-size:17.20px;">7:18</div>
<svg class="a" style="left:905.20px;top:833.60px;" width="6.4" height="4" viewBox="0 0 3.2 2"><path d="M0.2 0.3H3L1.6 1.7Z" fill="#c8c8c8"/></svg>
<svg class="a" style="left:931.20px;top:829.20px;" width="12" height="12" viewBox="0 0 6 6"><circle cx="3" cy="3.2" r="2.3" fill="none" stroke="#48487a" stroke-width="0.7"/><path d="M3 0.2L4.4 1L3 1.8Z" fill="#5050b0"/></svg>
<svg class="a" style="left:1264.00px;top:829.60px;" width="11.6" height="11.2" viewBox="0 0 5.8 5.6"><rect x="0.4" y="0.4" width="5" height="4.8" rx="0.5" fill="#e0e0e0"/><path d="M1.6 0.4V5.2M4.2 0.4V5.2" stroke="#333" stroke-width="0.5"/><path d="M1.6 2.8H4.2" stroke="#333" stroke-width="0.5"/></svg>
<svg class="a" style="left:1293.20px;top:829.60px;" width="12.8" height="11.2" viewBox="0 0 6.4 5.6"><path d="M0.4 1.9H1.6L3.2 0.7V4.9L1.6 3.7H0.4Z" fill="#b8b8b8"/><path d="M4.2 1.6C5 2.2 5 3.4 4.2 4M5 0.8C6.2 1.8 6.2 3.8 5 4.8" fill="none" stroke="#b8b8b8" stroke-width="0.5"/></svg>
<svg class="a" style="left:1320.80px;top:830.00px;" width="20.8" height="10.4" viewBox="0 0 10.4 5.2"><circle cx="2.6" cy="2.6" r="2" fill="none" stroke="#a8a8a8" stroke-width="0.6"/><circle cx="5.2" cy="2.6" r="2" fill="none" stroke="#a8a8a8" stroke-width="0.6"/><circle cx="7.8" cy="2.6" r="2" fill="none" stroke="#a8a8a8" stroke-width="0.6"/></svg>
</div></div>
</body></html>
